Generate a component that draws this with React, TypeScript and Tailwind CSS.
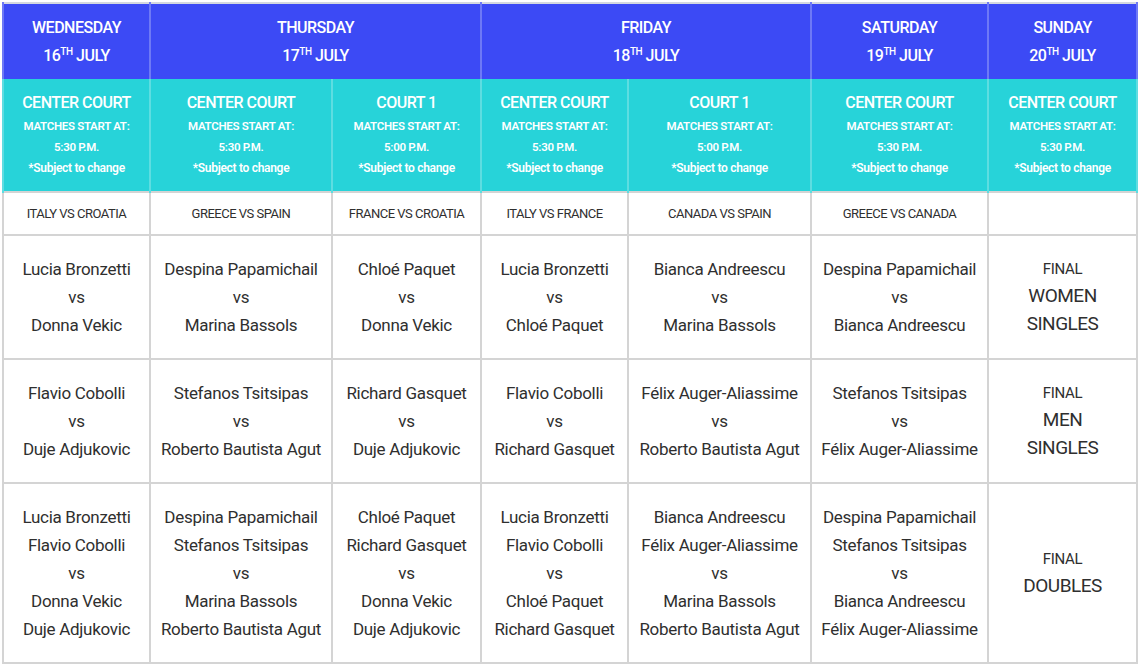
import React from "react";

type Court = { name: string; time: string };

const DAYS = [
  { day: "WEDNESDAY", date: "16", span: 1 },
  { day: "THURSDAY", date: "17", span: 2 },
  { day: "FRIDAY", date: "18", span: 2 },
  { day: "SATURDAY", date: "19", span: 1 },
  { day: "SUNDAY", date: "20", span: 1 },
];

const COURTS: Court[] = [
  { name: "CENTER COURT", time: "5:30 P.M." },
  { name: "CENTER COURT", time: "5:30 P.M." },
  { name: "COURT 1", time: "5:00 P.M." },
  { name: "CENTER COURT", time: "5:30 P.M." },
  { name: "COURT 1", time: "5:00 P.M." },
  { name: "CENTER COURT", time: "5:30 P.M." },
  { name: "CENTER COURT", time: "5:30 P.M." },
];

const TIES = [
  "ITALY VS CROATIA",
  "GREECE VS SPAIN",
  "FRANCE VS CROATIA",
  "ITALY VS FRANCE",
  "CANADA VS SPAIN",
  "GREECE VS CANADA",
  "",
];

const ROWS: { height: string; cells: string[][]; final: string[] }[] = [
  {
    height: "h-[124px]",
    cells: [
      ["Lucia Bronzetti", "vs", "Donna Vekic"],
      ["Despina Papamichail", "vs", "Marina Bassols"],
      ["Chloé Paquet", "vs", "Donna Vekic"],
      ["Lucia Bronzetti", "vs", "Chloé Paquet"],
      ["Bianca Andreescu", "vs", "Marina Bassols"],
      ["Despina Papamichail", "vs", "Bianca Andreescu"],
    ],
    final: ["WOMEN", "SINGLES"],
  },
  {
    height: "h-[124px]",
    cells: [
      ["Flavio Cobolli", "vs", "Duje Adjukovic"],
      ["Stefanos Tsitsipas", "vs", "Roberto Bautista Agut"],
      ["Richard Gasquet", "vs", "Duje Adjukovic"],
      ["Flavio Cobolli", "vs", "Richard Gasquet"],
      ["Félix Auger-Aliassime", "vs", "Roberto Bautista Agut"],
      ["Stefanos Tsitsipas", "vs", "Félix Auger-Aliassime"],
    ],
    final: ["MEN", "SINGLES"],
  },
  {
    height: "h-[180px]",
    cells: [
      ["Lucia Bronzetti", "Flavio Cobolli", "vs", "Donna Vekic", "Duje Adjukovic"],
      ["Despina Papamichail", "Stefanos Tsitsipas", "vs", "Marina Bassols", "Roberto Bautista Agut"],
      ["Chloé Paquet", "Richard Gasquet", "vs", "Donna Vekic", "Duje Adjukovic"],
      ["Lucia Bronzetti", "Flavio Cobolli", "vs", "Chloé Paquet", "Richard Gasquet"],
      ["Bianca Andreescu", "Félix Auger-Aliassime", "vs", "Marina Bassols", "Roberto Bautista Agut"],
      ["Despina Papamichail", "Stefanos Tsitsipas", "vs", "Bianca Andreescu", "Félix Auger-Aliassime"],
    ],
    final: ["DOUBLES"],
  },
];

export default function App() {
  return (
    <div className="bg-white w-[1140px] h-[664px] overflow-hidden pl-[2px] pt-[2px] font-['Roboto',sans-serif]">
      <table className="table-fixed border-collapse w-[1136px] border-2 border-[#d4d8e0]">
        <colgroup>
          <col className="w-[147px]" />
          <col className="w-[182px]" />
          <col className="w-[149px]" />
          <col className="w-[147px]" />
          <col className="w-[183px]" />
          <col className="w-[177px]" />
          <col className="w-[149px]" />
        </colgroup>
        <thead>
          {/* day header */}
          <tr className="h-[76px] bg-[#3c4af5] text-white">
            {DAYS.map((d) => (
              <th
                key={d.day}
                colSpan={d.span}
                className="border-x-2 border-[#6e79f6] text-[16px] font-medium tracking-[-0.5px] leading-[28px] text-center align-middle"
              >
                <div>{d.day}</div>
                <div>
                  {d.date}
                  <span className="text-[10px] align-super leading-none">TH</span> JULY
                </div>
              </th>
            ))}
          </tr>
          {/* courts */}
          <tr className="h-[113px] bg-[#27d3d9] text-white">
            {COURTS.map((c, i) => (
              <th key={i} className="border-x-2 border-[#5edde1] text-center align-middle font-medium">
                <div className="text-[16px] tracking-[-0.5px] leading-[24px] pb-[1px]">{c.name}</div>
                <div className="text-[11.5px] font-semibold tracking-[-0.3px] leading-[21px]">MATCHES START AT:</div>
                <div className="text-[11.5px] font-semibold tracking-[-0.3px] leading-[21px]">{c.time}</div>
                <div className="text-[12px] font-semibold tracking-[-0.3px] leading-[21px]">*Subject to change</div>
              </th>
            ))}
          </tr>
        </thead>
        <tbody className="text-[#2f2f2f]">
          <tr className="h-[43px]">
            {TIES.map((t, i) => (
              <td key={i} className="border-2 border-[#d4d4d4] text-center text-[13px] tracking-[-0.5px]">
                {t}
              </td>
            ))}
          </tr>
          {ROWS.map((r, ri) => (
            <tr key={ri} className={r.height}>
              {r.cells.map((lines, ci) => (
                <td
                  key={ci}
                  className="border-2 border-[#d4d4d4] text-center text-[17px] tracking-[-0.3px] leading-[28px]"
                >
                  {lines.map((l, li) => (
                    <div key={li}>{l}</div>
                  ))}
                </td>
              ))}
              <td className="border-2 border-[#d4d4d4] text-center">
                <div className="text-[15px] tracking-[-0.3px] leading-[26px]">FINAL</div>
                {r.final.map((f) => (
                  <div key={f} className="text-[19px] tracking-[-0.5px] leading-[28px]">
                    {f}
                  </div>
                ))}
              </td>
            </tr>
          ))}
        </tbody>
      </table>
    </div>
  );
}
